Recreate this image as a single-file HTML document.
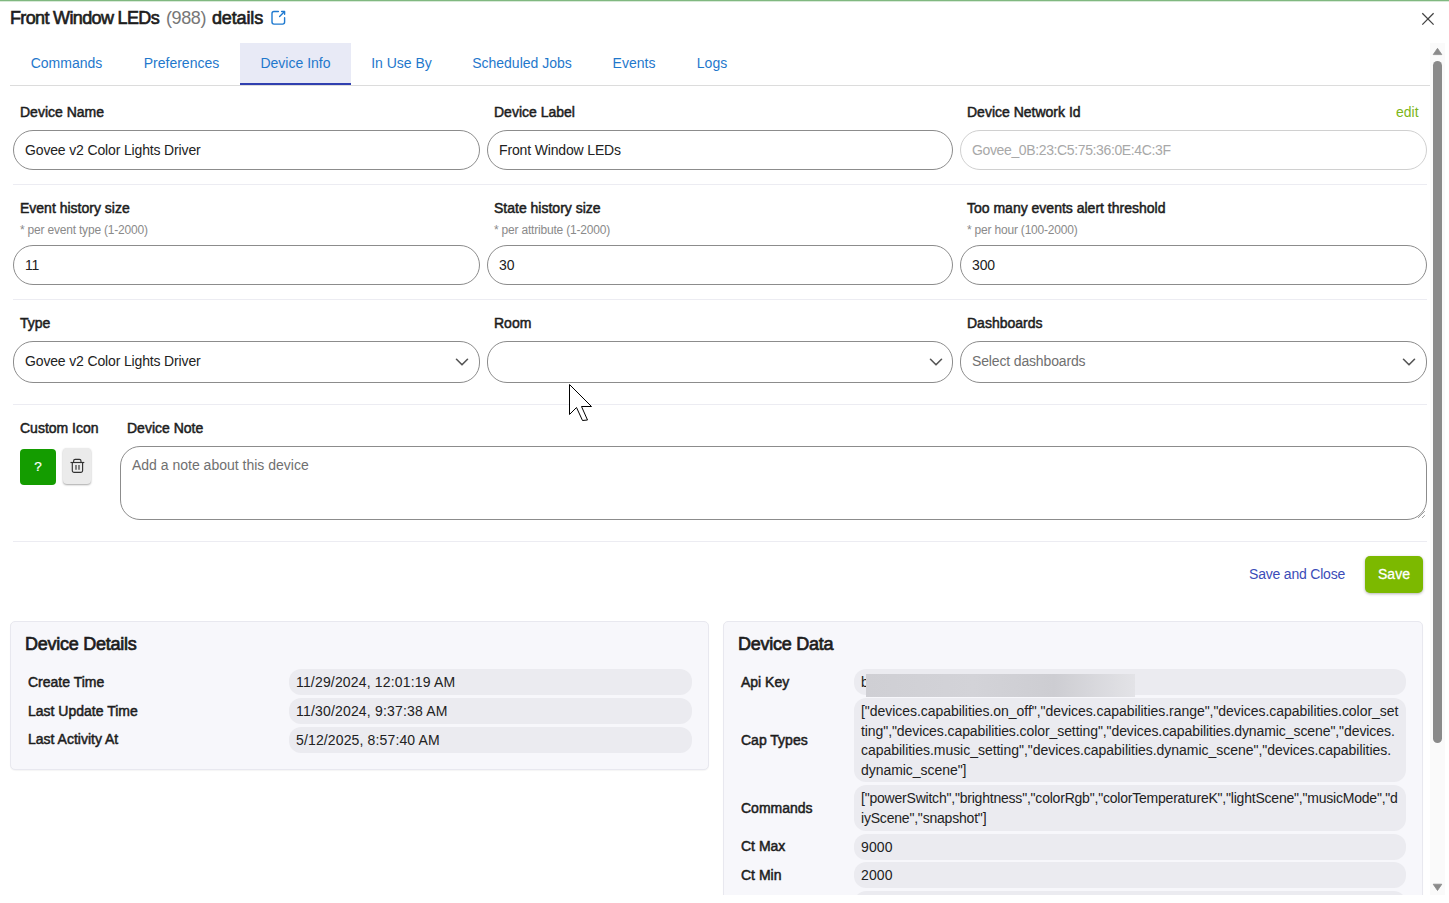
<!DOCTYPE html>
<html><head><meta charset="utf-8">
<style>
*{box-sizing:border-box;margin:0;padding:0}
html,body{width:1449px;height:903px;overflow:hidden;background:#fff;font-family:"Liberation Sans",sans-serif;color:#1f1f1f}
.abs{position:absolute}
#modal{position:absolute;left:0;top:0;width:1449px;height:895px;overflow:hidden}
#topline{left:0;top:0;width:1449px;height:1px;background:#80b880;box-shadow:0 1px 0 #d8ead8}
.med{font-weight:normal;-webkit-text-stroke:0.5px #1d1d1d;color:#1d1d1d}
#title{left:10px;top:8px;font-size:18px;white-space:nowrap;letter-spacing:-0.65px;-webkit-text-stroke:0.65px #1d1d1d!important}
#title .n{color:#777;-webkit-text-stroke:0;letter-spacing:-0.4px}
.tab{position:absolute;top:43px;height:42px;font-size:14px;color:#1f78cc;line-height:40px;text-align:center;white-space:nowrap}
.tab.act{background:#e8eaf6;border-bottom:2px solid #3040b0}
#tabline{left:10px;top:85px;width:1420px;height:1px;background:#dcdcdc}
.lbl{position:absolute;font-size:14px;white-space:nowrap}
.sub{position:absolute;font-size:12px;color:#8a8a8a;white-space:nowrap;letter-spacing:-0.2px}
.inp{position:absolute;height:40px;border:1px solid #8c8c8c;border-radius:20px;font-size:14px;line-height:38px;padding-left:11px;color:#222;white-space:nowrap;letter-spacing:-0.15px}
.sep{position:absolute;height:1px;background:#ececf2}
.panel{position:absolute;background:#f7f7fb;border:1px solid #e8e8ef;border-radius:5px;box-shadow:0 1px 1px rgba(0,0,0,.04)}
.ptitle{position:absolute;font-size:18px;white-space:nowrap;letter-spacing:-0.25px;-webkit-text-stroke:0.7px #1d1d1d!important}
.rl{position:absolute;font-size:14px;white-space:nowrap}
.rv{position:absolute;background:#ebebf0;border-radius:12px;font-size:14px;color:#222;padding:0 7px;line-height:19.6px;white-space:nowrap;letter-spacing:-0.15px}
</style></head><body>
<div id="modal">
<div class="abs" id="topline"></div>
<div class="abs med" id="title">Front Window LEDs</div><div class="abs" style="left:166px;top:8px;font-size:18px;color:#777;letter-spacing:-0.4px;white-space:nowrap">(988)</div><div class="abs med" style="left:212px;top:8px;font-size:18px;letter-spacing:-0.15px;white-space:nowrap;-webkit-text-stroke:0.65px #1d1d1d">details</div>

<div class="tab" style="left:10px;width:113px">Commands</div>
<div class="tab" style="left:123px;width:117px">Preferences</div>
<div class="tab act" style="left:240px;width:111px">Device Info</div>
<div class="tab" style="left:351px;width:101px">In Use By</div>
<div class="tab" style="left:452px;width:140px">Scheduled Jobs</div>
<div class="tab" style="left:592px;width:84px">Events</div>
<div class="tab" style="left:676px;width:72px">Logs</div>
<div class="abs" id="tabline"></div>

<!-- row1 -->
<div class="lbl med" style="left:20px;top:104px">Device Name</div>
<div class="inp" style="left:13px;top:130px;width:467px">Govee v2 Color Lights Driver</div>
<div class="lbl med" style="left:494px;top:104px">Device Label</div>
<div class="inp" style="left:487px;top:130px;width:466px">Front Window LEDs</div>
<div class="lbl med" style="left:967px;top:104px">Device Network Id</div>
<div class="abs" style="left:1396px;top:104px;font-size:14px;color:#7cb518">edit</div>
<div class="inp" style="left:960px;top:130px;width:467px;border-color:#d0d0d0;color:#a8a8a8;letter-spacing:-0.37px">Govee_0B:23:C5:75:36:0E:4C:3F</div>
<div class="sep" style="left:13px;top:184px;width:1414px"></div>

<!-- row2 -->
<div class="lbl med" style="left:20px;top:200px">Event history size</div>
<div class="sub" style="left:20px;top:223px">* per event type (1-2000)</div>
<div class="inp" style="left:13px;top:245px;width:467px">11</div>
<div class="lbl med" style="left:494px;top:200px">State history size</div>
<div class="sub" style="left:494px;top:223px">* per attribute (1-2000)</div>
<div class="inp" style="left:487px;top:245px;width:466px">30</div>
<div class="lbl med" style="left:967px;top:200px">Too many events alert threshold</div>
<div class="sub" style="left:967px;top:223px">* per hour (100-2000)</div>
<div class="inp" style="left:960px;top:245px;width:467px">300</div>
<div class="sep" style="left:13px;top:299px;width:1414px"></div>

<!-- row3 -->
<div class="lbl med" style="left:20px;top:315px">Type</div>
<div class="inp" style="left:13px;top:341px;width:467px;height:42px;line-height:39px">Govee v2 Color Lights Driver</div>
<div class="lbl med" style="left:494px;top:315px">Room</div>
<div class="inp" style="left:487px;top:341px;width:466px;height:42px"></div>
<div class="lbl med" style="left:967px;top:315px">Dashboards</div>
<div class="inp" style="left:960px;top:341px;width:467px;height:42px;line-height:39px;color:#707070">Select dashboards</div>
<div class="sep" style="left:13px;top:404px;width:1414px"></div>

<!-- row4 -->
<div class="lbl med" style="left:20px;top:420px">Custom Icon</div>
<div class="lbl med" style="left:127px;top:420px">Device Note</div>
<div class="abs" style="left:20px;top:449px;width:36px;height:36px;background:#149c00;border-radius:4px;color:#fff;font-size:13.5px;-webkit-text-stroke:0.2px #fff;text-align:center;line-height:36px">?</div>
<div class="abs" style="left:63px;top:448px;width:28px;height:36px;background:#ebebeb;border-radius:4px;box-shadow:0 1px 2px rgba(0,0,0,.35)"></div>
<div class="abs" style="left:120px;top:446px;width:1307px;height:74px;border:1px solid #8c8c8c;border-radius:20px;font-size:14px;color:#707070;padding:10px 0 0 11px;letter-spacing:0px">Add a note about this device</div>
<div class="sep" style="left:13px;top:541px;width:1414px"></div>

<div class="abs" style="left:1249px;top:566px;font-size:14px;color:#3b4cb8;letter-spacing:-0.2px">Save and Close</div>
<div class="abs" style="left:1365px;top:556px;width:58px;height:37px;background:#7cb900;border-radius:5px;box-shadow:0 1px 3px rgba(0,0,0,.3);color:#fff;font-size:14px;-webkit-text-stroke:0.3px #fff;text-align:center;line-height:37px">Save</div>

<!-- panels -->
<div class="panel" style="left:10px;top:621px;width:699px;height:149px"></div>
<div class="ptitle med" style="left:25px;top:634px">Device Details</div>
<div class="rl med" style="left:28px;top:674px">Create Time</div>
<div class="rv" style="left:289px;top:669px;width:403px;height:26px;line-height:26px;letter-spacing:0.17px">11/29/2024, 12:01:19 AM</div>
<div class="rl med" style="left:28px;top:703px">Last Update Time</div>
<div class="rv" style="left:289px;top:698px;width:403px;height:26px;line-height:26px;letter-spacing:0.18px">11/30/2024, 9:37:38 AM</div>
<div class="rl med" style="left:28px;top:731px">Last Activity At</div>
<div class="rv" style="left:289px;top:727px;width:403px;height:26px;line-height:26px;letter-spacing:0.14px">5/12/2025, 8:57:40 AM</div>

<div class="panel" style="left:723px;top:621px;width:700px;height:300px"></div>
<div class="ptitle med" style="left:738px;top:634px">Device Data</div>
<div class="rl med" style="left:741px;top:674px">Api Key</div>
<div class="rv" style="left:854px;top:669px;width:552px;height:26px;line-height:26px">b</div>
<div class="abs" style="left:866px;top:674px;width:269px;height:23px;background:linear-gradient(90deg,#cfcfd4 0%,#d3d3d8 40%,#cdcdd2 70%,#e3e3e7 100%)"></div>
<div class="rl med" style="left:741px;top:732px">Cap Types</div>
<div class="rv" style="left:854px;top:698px;width:552px;height:84px;padding-top:4px"><span style="letter-spacing:-0.044px">["devices.capabilities.on_off","devices.capabilities.range","devices.capabilities.color_set</span><br><span style="letter-spacing:-0.083px">ting","devices.capabilities.color_setting","devices.capabilities.dynamic_scene","devices.</span><br><span style="letter-spacing:-0.03px">capabilities.music_setting","devices.capabilities.dynamic_scene","devices.capabilities.</span><br><span style="letter-spacing:-0.05px">dynamic_scene"]</span></div>
<div class="rl med" style="left:741px;top:800px">Commands</div>
<div class="rv" style="left:854px;top:785px;width:552px;height:46px;padding-top:4px"><span style="letter-spacing:-0.211px">["powerSwitch","brightness","colorRgb","colorTemperatureK","lightScene","musicMode","d</span><br><span style="letter-spacing:-0.2px">iyScene","snapshot"]</span></div>
<div class="rl med" style="left:741px;top:838px">Ct Max</div>
<div class="rv" style="left:854px;top:834px;width:552px;height:26px;line-height:26px;letter-spacing:0.15px">9000</div>
<div class="rl med" style="left:741px;top:867px">Ct Min</div>
<div class="rv" style="left:854px;top:862px;width:552px;height:26px;line-height:26px;letter-spacing:0.15px">2000</div>
<div class="rv" style="left:854px;top:891px;width:552px;height:26px"></div>
</div>

<svg class="abs" style="left:0;top:0" width="1449" height="903" viewBox="0 0 1449 903">
<g fill="none" stroke="#1f7ad0" stroke-width="1.4" stroke-linecap="round" stroke-linejoin="round">
<path d="M278.4 11.5H274a2 2 0 0 0-2 2V22.1a2 2 0 0 0 2 2H282.6a2 2 0 0 0 2-2V17.7"/>
<path d="M281.6 11.5H284.6V14.2"/><path d="M279.6 16.5L284.3 11.8"/>
</g>
<g stroke="#444" stroke-width="1.3" stroke-linecap="butt"><path d="M1422.3 13.3L1433.6 24.6M1433.6 13.3L1422.3 24.6"/></g>
<g fill="none" stroke="#555" stroke-width="1.6" stroke-linecap="round" stroke-linejoin="round">
<path d="M456.5 359.3L462 364.8L467.5 359.3"/>
<path d="M930.5 359.3L936 364.8L941.5 359.3"/>
<path d="M1403.5 359.3L1409 364.8L1414.5 359.3"/>
</g>
<g fill="none" stroke="#333" stroke-width="1.15" stroke-linejoin="round">
<path d="M70.5 462.5H84.3"/>
<path d="M73.6 462.3V461a1.6 1.6 0 0 1 1.6-1.6H79.4a1.6 1.6 0 0 1 1.6 1.6V462.3"/>
<path d="M72.3 462.5V470.6a1.8 1.8 0 0 0 1.8 1.8H80.8a1.8 1.8 0 0 0 1.8-1.8V462.5"/>
<path d="M76 465V469.8M79 465V469.8"/>
</g>
</svg>
<div class="abs" style="left:1430px;top:43px;width:15px;height:852px;background:#fafafa"></div>
<div class="abs" style="left:1433px;top:61px;width:9px;height:682px;background:#8a8a8a;border-radius:4.5px"></div>
<svg class="abs" style="left:0;top:0" width="1449" height="903" viewBox="0 0 1449 903">
<path d="M1437.5 48.3L1441.8 54.6H1433.2Z" fill="#8a8a8a" stroke="#8a8a8a" stroke-width="0.8" stroke-linejoin="round"/>
<path d="M1437.5 890.5L1441.8 884.2H1433.2Z" fill="#8a8a8a" stroke="#8a8a8a" stroke-width="0.8" stroke-linejoin="round"/>
<path d="M1418.3 517.7L1424.8 511.2M1422.3 517.7L1424.8 515.2" stroke="#555" stroke-width="0.9" stroke-dasharray="0.9 0.5"/>
<path d="M569.5 384.5V414.5L576.5 407.5L582.5 420.5L587.5 420L581.5 406.5H591.5Z" fill="#fff" stroke="#000" stroke-width="1" stroke-linejoin="miter"/>
</svg>
</body></html>
